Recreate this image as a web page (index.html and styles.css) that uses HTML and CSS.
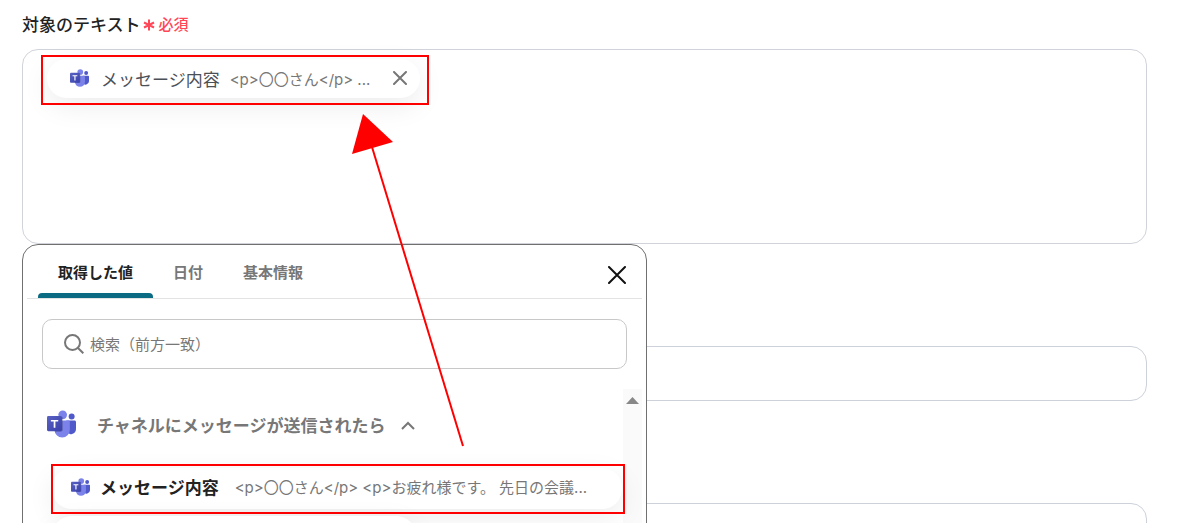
FILE: index.html
```html
<!DOCTYPE html>
<html lang="ja">
<head>
    <meta charset="UTF-8">
    <meta name="viewport" content="width=device-width, initial-scale=1.0">
    <title>対象のテキスト</title>
    <link rel="stylesheet" href="styles.css">
</head>
<body>
    <!-- 共通アイコン -->
    <svg class="icon-defs" aria-hidden="true">
        <defs>
            <linearGradient id="tile" x1="0" y1="0" x2="1" y2="1">
                <stop offset="0" stop-color="#5a62c3"/>
                <stop offset="1" stop-color="#3940ab"/>
            </linearGradient>
            <symbol id="teams" viewBox="0 0 30 28">
                <circle cx="25.5" cy="6.2" r="3.1" fill="#5059c9"/>
                <path d="M20 10.5h8.5c.8 0 1.5.7 1.5 1.5v7.2a5.3 5.3 0 0 1-10 2.4z" fill="#5059c9"/>
                <circle cx="16.2" cy="4.5" r="4.5" fill="#7b83eb"/>
                <path d="M9 10.5h13.2c.8 0 1.4.6 1.4 1.4v8.2a7.9 7.9 0 0 1-15.8 0v-8.4c0-.7.5-1.2 1.2-1.2z" fill="#7b83eb"/>
                <path d="M8 7h8.5v12.8c0 1.5-.8 2.2-2.2 2.2H8z" fill="#000" opacity=".2"/>
                <rect x="0" y="5.8" width="15.5" height="15.6" rx="1.4" fill="url(#tile)"/>
                <path d="M4 9.8h7.6v1.6H8.7v6.6H6.9v-6.6H4z" fill="#fff"/>
            </symbol>
        </defs>
    </svg>

    <main class="form">
        <div class="field-label" id="targetLabel">
            対象のテキスト
            <span class="required">
                <svg class="required-mark" viewBox="0 0 12 12" aria-hidden="true"><path d="M6 .5v11M1 3.5l10 5M11 3.5l-10 5"/></svg>必須
            </span>
        </div>

        <div class="anchor">
            <div class="token-box" role="textbox" aria-labelledby="targetLabel" tabindex="0">
                <div class="chip token marked">
                    <svg class="chip-icon" aria-hidden="true"><use href="#teams"/></svg>
                    <span class="token-name">メッセージ内容</span>
                    <span class="chip-value">&lt;p&gt;〇〇さん&lt;/p&gt; ...</span>
                    <button type="button" class="icon-btn token-remove" aria-label="削除">
                        <svg viewBox="0 0 14 14" aria-hidden="true"><path d="M1 1l12 12M13 1L1 13"/></svg>
                    </button>
                </div>
            </div>

            <!-- 値の選択パネル -->
            <section class="picker" aria-label="値の選択">
                <div class="picker-head">
                    <div class="tabs" role="tablist">
                        <button type="button" class="tab active" role="tab" aria-selected="true">取得した値</button>
                        <button type="button" class="tab" role="tab" aria-selected="false">日付</button>
                        <button type="button" class="tab" role="tab" aria-selected="false">基本情報</button>
                    </div>
                    <button type="button" class="icon-btn picker-close" aria-label="閉じる">
                        <svg viewBox="0 0 18 18" aria-hidden="true"><path d="M1 1l16 16M17 1L1 17"/></svg>
                    </button>
                </div>

                <label class="search">
                    <svg class="search-icon" viewBox="0 0 20 20" aria-hidden="true"><circle cx="8.5" cy="8.5" r="7.5"/><path d="M14 14l5.3 5.3"/></svg>
                    <input type="text" class="search-input" placeholder="検索（前方一致）" aria-label="検索">
                </label>

                <div class="picker-body">
                    <div class="picker-list">
                        <button type="button" class="group-head" aria-expanded="true">
                            <svg class="group-icon" aria-hidden="true"><use href="#teams"/></svg>
                            <span>チャネルにメッセージが送信されたら</span>
                            <svg class="chevron" viewBox="0 0 14 9" aria-hidden="true"><path d="M1 8l6-6 6 6"/></svg>
                        </button>
                        <button type="button" class="chip option marked">
                            <svg class="chip-icon" aria-hidden="true"><use href="#teams"/></svg>
                            <span class="option-name">メッセージ内容</span>
                            <span class="chip-value">&lt;p&gt;〇〇さん&lt;/p&gt; &lt;p&gt;お疲れ様です。 先日の会議...</span>
                        </button>
                        <button type="button" class="chip option option-short" aria-label="次の項目"></button>
                    </div>
                    <div class="scrollbar" aria-hidden="true">
                        <svg class="scroll-up" viewBox="0 0 13 7"><path d="M6.5 0L13 7H0z"/></svg>
                    </div>
                </div>
            </section>
        </div>

        <input type="text" class="text-input" aria-label="入力項目1">
        <input type="text" class="text-input" aria-label="入力項目2">
    </main>

    <!-- 操作を示す矢印 -->
    <svg class="arrow" viewBox="0 0 112 333" aria-hidden="true">
        <path class="arrow-line" d="M20 33L111 332"/>
        <path class="arrow-head" d="M11 0L41 28 0 40z"/>
    </svg>
</body>
</html>
```
FILE: styles.css
```css
* {
    margin: 0;
    padding: 0;
    box-sizing: border-box;
}

body {
    position: relative;
    height: 100vh;
    overflow: hidden;
    font-family: "Noto Sans CJK JP", sans-serif;
    font-size: 15px;
    color: #222;
    background-color: #fff;
}

button,
input {
    font: inherit;
    color: inherit;
    background: none;
    border: none;
}

button {
    cursor: pointer;
}

svg {
    display: block;
    flex-shrink: 0;
    fill: none;
}

.icon-defs {
    position: absolute;
    width: 0;
    height: 0;
}

/* フォーム */
.form {
    height: 100%;
    padding: 12px 31px 0 22px;
    overflow: hidden;
}

.field-label {
    display: flex;
    align-items: center;
    gap: 2px;
    height: 22px;
    margin-bottom: 15px;
    font-size: 17px;
    font-weight: 500;
}

.required {
    display: flex;
    align-items: center;
    gap: 4px;
    font-size: 15px;
    color: #ff4757;
}

.required-mark {
    width: 12px;
    height: 12px;
    margin-top: 4px;
    stroke: currentColor;
    stroke-width: 2;
}

.anchor {
    position: relative;
    margin-bottom: 102px;
}

.token-box {
    height: 195px;
    padding: 9px 24px;
    border: 1px solid #d0d3da;
    border-radius: 16px;
}

.text-input {
    display: block;
    width: 100%;
    height: 55px;
    margin-bottom: 102px;
    padding: 0 20px;
    border: 1px solid #ccd1da;
    border-radius: 16px;
}

.text-input:last-child {
    margin-bottom: 0;
}

/* 値のチップ */
.chip {
    display: flex;
    align-items: center;
    position: relative;
    background-color: #fff;
    border-radius: 20px;
    box-shadow: 0 8px 28px rgba(0, 0, 0, 0.08);
    white-space: nowrap;
}

.chip-icon {
    width: 19px;
    height: 18px;
}

.chip-value {
    font-family: Inter, "Noto Sans CJK JP", sans-serif;
    font-size: 15px;
    font-weight: 400;
    color: #777;
}

.token {
    width: 373px;
    height: 39px;
    padding: 0 12px 1px 23px;
}

.token-name {
    margin: 0 10px 0 12px;
    font-size: 17px;
    color: #4b5057;
}

.icon-btn {
    display: flex;
    align-items: center;
    justify-content: center;
}

.icon-btn svg {
    stroke: currentColor;
    stroke-width: 2;
    stroke-linecap: round;
}

.token-remove {
    width: 16px;
    height: 16px;
    margin-left: auto;
    color: #777;
}

.token-remove svg {
    width: 14px;
    height: 14px;
}

/* 赤枠 */
.marked::after {
    content: "";
    position: absolute;
    inset: -4px -9px -7px -6px;
    border: 2px solid #f00;
    pointer-events: none;
}

.option.marked::after {
    inset: -4px -3px -5px -1px;
}

/* 選択パネル */
.picker {
    position: absolute;
    top: 195px;
    left: 0;
    width: 625px;
    height: 420px;
    padding: 0 4px;
    background-color: #fff;
    border: 1px solid #707070;
    border-radius: 16px;
    overflow: hidden;
}

.picker-head {
    display: flex;
    align-items: center;
    justify-content: space-between;
    height: 54px;
    padding: 0 15px 0 11px;
    border-bottom: 1px solid #e3e3e3;
}

.tabs {
    display: flex;
    align-self: stretch;
}

.tab {
    position: relative;
    padding: 0 20px;
    font-weight: 700;
    color: #777;
}

.tab.active {
    color: #222;
}

.tab.active::after {
    content: "";
    position: absolute;
    inset: auto 0 0 0;
    height: 5px;
    background-color: #0b6b82;
    border-radius: 4px 4px 0 0;
}

.picker-close {
    width: 20px;
    height: 20px;
    margin-top: 6px;
    color: #111;
}

.picker-close svg {
    width: 18px;
    height: 18px;
}

.search {
    display: flex;
    align-items: center;
    gap: 6px;
    height: 50px;
    margin: 20px 15px;
    padding: 0 21px 1px;
    border: 1px solid #c8c8c8;
    border-radius: 10px;
}

.search-icon {
    width: 20px;
    height: 20px;
    stroke: #777;
    stroke-width: 2;
}

.search-input {
    flex: 1;
    outline: none;
}

.search-input::placeholder {
    color: #777;
    opacity: 1;
}

.picker-body {
    display: flex;
    height: 300px;
}

.picker-list {
    display: flex;
    flex-direction: column;
    flex: 1;
    gap: 7px;
    position: relative;
    z-index: 1;
    padding: 11px 1px 0 25px;
}

.group-head {
    display: flex;
    align-items: center;
    height: 50px;
    margin: 0 0 11px -5px;
    padding-bottom: 2px;
    font-size: 17px;
    font-weight: 700;
    color: #777;
}

.group-icon {
    width: 29px;
    height: 28px;
    margin-right: 21px;
}

.chevron {
    width: 14px;
    height: 9px;
    margin: 2px 0 0 15px;
    stroke: #777;
    stroke-width: 2;
}

.option {
    flex-shrink: 0;
    height: 41px;
    padding: 0 19px 4px;
}

.option-name {
    margin: 0 16px 0 10px;
    font-size: 17px;
    font-weight: 700;
    color: #222;
}

.option-short {
    width: 364px;
}

.scrollbar {
    display: flex;
    justify-content: center;
    width: 19px;
    padding-top: 8px;
    background-color: #fafafa;
}

.scroll-up {
    width: 13px;
    height: 7px;
    fill: #888;
}

/* 矢印 */
.arrow {
    position: absolute;
    top: 114px;
    left: 352px;
    width: 112px;
    height: 333px;
    pointer-events: none;
}

.arrow-line {
    stroke: #f00;
    stroke-width: 2;
}

.arrow-head {
    fill: #f00;
}
```
